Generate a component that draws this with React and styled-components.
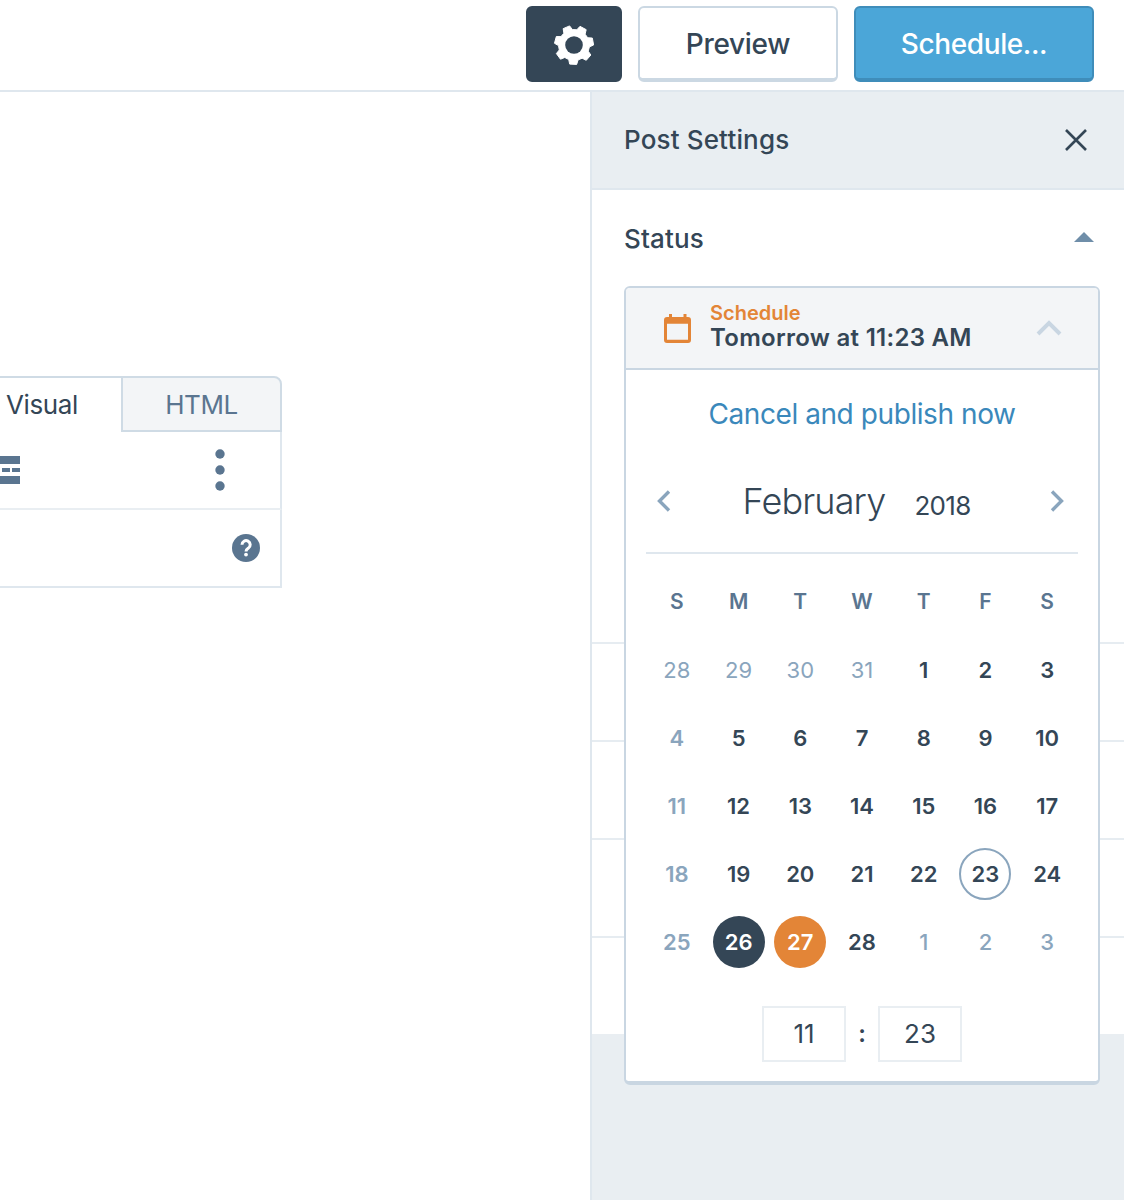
import React from "react";
import styled, { createGlobalStyle } from "styled-components";

const Global = createGlobalStyle`
  html, body { margin: 0; padding: 0; background: #fff; }
  body { font-family: Inter, "Noto Sans", sans-serif; color: #344656; overflow-x: hidden; }
  * { box-sizing: border-box; }
`;

const Page = styled.div`width: 1124px; height: 1200px; display: flex; flex-direction: column; overflow: hidden;`;
const Header = styled.header`
  height: 92px; flex: none; border-bottom: 2px solid #dfe7ee; padding: 6px 30px 0 0;
  display: flex; justify-content: flex-end; align-items: flex-start; gap: 16px;
`;
const Button = styled.button`
  height: 76px; width: ${p => p.$w}px; border-radius: 6px; padding: ${p => p.$pad || 2}px 0 0; font: 500 28px/1 Inter, sans-serif;
  letter-spacing: ${p => p.$ls || 0}px;
  display: flex; align-items: center; justify-content: center; color: ${p => p.$fg};
  background: ${p => p.$bg}; border: 2px solid ${p => p.$edge}; border-bottom-width: 4px;
`;
const Main = styled.div`flex: 1; display: flex; min-height: 0;`;
const Canvas = styled.main`width: 590px; flex: none; padding-top: 284px;`;
const Editor = styled.section`width: 282px;`;
const Tabs = styled.div`display: flex; height: 56px;`;
const VisualTab = styled.div`
  width: 121px; padding: 12px 0 0 6px; font: 400 26px/30px Inter, sans-serif; color: #344656; letter-spacing: -0.4px;
  border-top: 2px solid #cfdbe5;
`;
const HtmlTab = styled.div`
  flex: 1; background: #f3f5f7; color: #5a7590; font: 400 26px/30px Inter, sans-serif; text-align: center; padding-top: 12px; letter-spacing: -0.4px;
  border: 2px solid #cfdbe5; border-radius: 0 8px 0 0;
`;
const ToolRow = styled.div`
  height: ${p => p.$h}px; position: relative; display: flex; align-items: center; justify-content: space-between;
  border-right: 2px solid #dfe7ee; border-bottom: 2px solid ${p => p.$line};
`;
const Sidebar = styled.aside`
  flex: 1; position: relative; background: #e9eef2; border-left: 2px solid #dfe7ee;
`;
const SideHead = styled.div`
  height: 98px; padding: 0 36px 0 32px; display: flex; align-items: center; justify-content: space-between;
  border-bottom: 2px solid #dfe7ee; font: 500 26px/30px Inter, sans-serif; color: #344656; letter-spacing: 0.15px;
`;
const SideBody = styled.div`background: #fff;`;
const StatusSection = styled.div`
  height: 454px; padding: 34px 30px 0 32px; display: flex; justify-content: space-between; align-items: flex-start;
  font: 500 26px/30px Inter, sans-serif; border-bottom: 2px solid #e6ecf1; letter-spacing: 0.15px;
`;
const Fold = styled.div`height: ${p => p.$h}px; border-bottom: ${p => (p.$last ? "0" : "2px solid #e6ecf1")};`;
const Popover = styled.div`
  position: absolute; left: 32px; top: 194px; width: 476px; height: 799px; background: #fff;
  border: 2px solid #c9d6e2; border-bottom-width: 4px; border-radius: 6px; overflow: hidden;
`;
const PopHead = styled.div`
  height: 82px; background: #f3f5f7; border-bottom: 2px solid #c9d6e2; display: flex; align-items: center;
  padding: 0 36px 0 38px; position: relative;
`;
const PopTitles = styled.div`margin: -2px 0 0 19px; flex: 1;`;
const PopLabel = styled.div`font: 600 20px/20px Inter, sans-serif; color: #e38537;`;
const PopValue = styled.div`font: 600 24px/28px Inter, sans-serif; color: #344656; margin-top: 1px; letter-spacing: 0.28px;`;
const CancelLink = styled.a`
  display: block; text-align: center; font: 400 28px/34px Inter, sans-serif; color: #3a88bb; margin-top: 27px; letter-spacing: -0.42px;
`;
const Calendar = styled.div`margin: 0 20px;`;
const MonthRow = styled.div`
  height: 96px; margin-top: 27px; border-bottom: 2px solid #dfe7ee; padding: 0 14px 0 11px; display: flex; align-items: flex-start;
`;
const MonthLabel = styled.div`
  flex: 1; display: flex; justify-content: center; align-items: baseline; gap: 29px; color: #344656; padding-top: 21px; margin-right: 8px;
`;
const Month = styled.span`font: 300 36px/44px Inter, sans-serif; letter-spacing: -0.85px;`;
const Year = styled.span`font: 400 26px/30px Inter, sans-serif; letter-spacing: -0.7px; transform: translateY(1px);`;
const Grid = styled.div`display: grid; grid-template-columns: repeat(7, 1fr); grid-template-rows: 69px; grid-auto-rows: 68px; margin-top: 13px;`;
const Cell = styled.div`display: flex; align-items: center; justify-content: center;`;
const Head = styled(Cell)`font: 600 21px/1 Inter, sans-serif; color: #5a7590;`;
const Day = styled.span`
  width: 52px; height: 52px; border-radius: 50%; display: flex; align-items: center; justify-content: center;
  font: ${p => p.$weight} 22px/1 Inter, sans-serif;
  color: ${p => (p.$muted ? "#8aa5bd" : p.$kind ? "#fff" : "#344656")};
  background: ${p => (p.$kind === "dark" ? "#344656" : p.$kind === "orange" ? "#e38537" : "transparent")};
  border: ${p => (p.$today ? "2px solid #8aa5bd" : "0")};
`;
const TimeRow = styled.div`display: flex; justify-content: center; align-items: center; margin-top: 30px;`;
const TimeBox = styled.div`
  width: 84px; height: 56px; border: 2px solid #e9eef2; display: flex; align-items: center; justify-content: center;
  font: 400 26px/1 Inter, sans-serif; color: #344656;
`;
const Colon = styled.span`width: 32px; text-align: center; font: 600 24px/1 Inter, sans-serif; color: #344656;`;
const GearSlot = styled.span`display: flex; padding-top: 2px;`;

function gearPath() {
  const teeth = 7, cx = 21, cy = 21, R = 19.6, r = 15.5;
  let d = "";
  for (let i = 0; i < teeth; i++) {
    const a = ((i * 360) / teeth + 41) * Math.PI / 180, s = (2 * Math.PI) / teeth;
    const pts = [[r, a - s * 0.34], [R, a - s * 0.2], [R, a + s * 0.2], [r, a + s * 0.34]];
    pts.forEach(([q, t], j) => {
      d += `${i === 0 && j === 0 ? "M" : "L"}${(cx + q * Math.cos(t)).toFixed(2)} ${(cy + q * Math.sin(t)).toFixed(2)}`;
    });
  }
  return d + "Z";
}

const Gear = () => (
  <GearSlot>
    <svg width="42" height="42" viewBox="0 0 42 42">
      <path fill="#fff" stroke="#fff" strokeWidth="1" strokeLinejoin="round" d={gearPath()} />
      <circle cx="21" cy="21" r="8.800" fill="#344656" />
    </svg>
  </GearSlot>
);
const Close = () => (
  <svg width="24" height="24" viewBox="0 0 24 24" fill="none" stroke="#344656" strokeWidth="2.600"><path d="M2 2l20 20M22 2L2 22" /></svg>
);
const Triangle = () => (
  <svg width="20" height="10" viewBox="0 0 20 10" style={{ marginTop: 8 }}><path d="M10 0l10 10H0z" fill="#6f8ea9" /></svg>
);
const CalIcon = () => (
  <svg width="27" height="29" viewBox="0 0 27 29" fill="#e38537" style={{ flex: "none" }}>
    <path fillRule="evenodd" d="M3 3h21a3 3 0 0 1 3 3v20a3 3 0 0 1-3 3H3a3 3 0 0 1-3-3V6a3 3 0 0 1 3-3zM3 9.700V25.700H24V9.700z" />
    <rect x="5" y="0" width="3" height="5" /><rect x="19.500" y="0" width="3" height="5" />
  </svg>
);
const ChevUp = () => (
  <svg width="26" height="16" viewBox="0 0 26 16" fill="none" stroke="#c9d6e2" strokeWidth="4"><path d="M2 14L13 3l11 11" /></svg>
);
const Nav = ({ dir }) => (
  <svg width="14" height="22" viewBox="0 0 14 22" fill="none" stroke="#8aa5bd" strokeWidth="3.400" style={{ marginTop: 32, flex: "none" }}>
    <path d={dir === "l" ? "M12 1.500L2.500 11 12 20.500" : "M2 1.500L11.500 11 2 20.500"} />
  </svg>
);
const More = () => (
  <svg width="20" height="28" viewBox="0 0 20 28" fill="#5a7590">
    <rect x="0" y="0" width="20" height="8" /><rect x="2" y="12" width="8" height="4" /><rect x="12" y="12" width="8" height="4" /><rect x="0" y="20" width="20" height="8" />
  </svg>
);
const Dots = () => (
  <svg width="10" height="42" viewBox="0 0 10 42" fill="#5a7590" style={{ marginRight: 55 }}>
    <circle cx="5" cy="5" r="4.700" /><circle cx="5" cy="21" r="4.700" /><circle cx="5" cy="37" r="4.700" />
  </svg>
);
const Help = () => (
  <svg width="28" height="28" viewBox="0 0 28 28" style={{ marginRight: 20, marginLeft: "auto" }}>
    <circle cx="14" cy="14" r="14" fill="#5a7590" />
    <path d="M10 10.800a4.100 4.100 0 1 1 6.300 3.400c-1.300.9-2.300 1.500-2.300 3.300" fill="none" stroke="#fff" strokeWidth="3" />
    <circle cx="14" cy="20.600" r="1.900" fill="#fff" />
  </svg>
);

const heads = ["S", "M", "T", "W", "T", "F", "S"];
const days = [
  [28, 1, 0, 0, 400], [29, 1, 0, 0, 400], [30, 1, 0, 0, 400], [31, 1, 0, 0, 400], [1], [2], [3],
  [4, 1], [5], [6], [7], [8], [9], [10],
  [11, 1], [12], [13], [14], [15], [16], [17],
  [18, 1], [19], [20], [21], [22], [23, 0, 0, 1], [24],
  [25, 1], [26, 0, "dark"], [27, 0, "orange"], [28], [1, 1, 0, 0, 500], [2, 1, 0, 0, 500], [3, 1, 0, 0, 500],
];

export default function App() {
  return (
    <Page>
      <Global />
      <Header>
        <Button $w={96} $pad={1} $bg="#344656" $edge="#344656" $fg="#fff"><Gear /></Button>
        <Button $w={200} $ls={-0.3} $bg="#fff" $edge="#cbd8e3" $fg="#344656">Preview</Button>
        <Button $w={240} $ls={-0.4} $bg="#4ba6d8" $edge="#3f8dba" $fg="#fff">Schedule...</Button>
      </Header>
      <Main>
        <Canvas>
          <Editor>
            <Tabs>
              <VisualTab>Visual</VisualTab>
              <HtmlTab>HTML</HtmlTab>
            </Tabs>
            <ToolRow $h={78} $line="#e9eef2"><More /><Dots /></ToolRow>
            <ToolRow $h={78} $line="#dfe7ee"><Help /></ToolRow>
          </Editor>
        </Canvas>
        <Sidebar>
          <SideHead>Post Settings<Close /></SideHead>
          <SideBody>
            <StatusSection>Status<Triangle /></StatusSection>
            <Fold $h={98} />
            <Fold $h={98} />
            <Fold $h={98} />
            <Fold $h={96} $last />
          </SideBody>
          <Popover>
            <PopHead>
              <CalIcon />
              <PopTitles>
                <PopLabel>Schedule</PopLabel>
                <PopValue>Tomorrow at 11:23 AM</PopValue>
              </PopTitles>
              <ChevUp />
            </PopHead>
            <CancelLink>Cancel and publish now</CancelLink>
            <Calendar>
              <MonthRow>
                <Nav dir="l" />
                <MonthLabel><Month>February</Month><Year>2018</Year></MonthLabel>
                <Nav dir="r" />
              </MonthRow>
              <Grid>
                {heads.map((h, i) => <Head key={i}>{h}</Head>)}
                {days.map(([n, muted, kind, today, weight], i) => (
                  <Cell key={i}><Day $muted={muted} $kind={kind} $today={today} $weight={weight || 600}>{n}</Day></Cell>
                ))}
              </Grid>
              <TimeRow>
                <TimeBox>11</TimeBox>
                <Colon>:</Colon>
                <TimeBox>23</TimeBox>
              </TimeRow>
            </Calendar>
          </Popover>
        </Sidebar>
      </Main>
    </Page>
  );
}
